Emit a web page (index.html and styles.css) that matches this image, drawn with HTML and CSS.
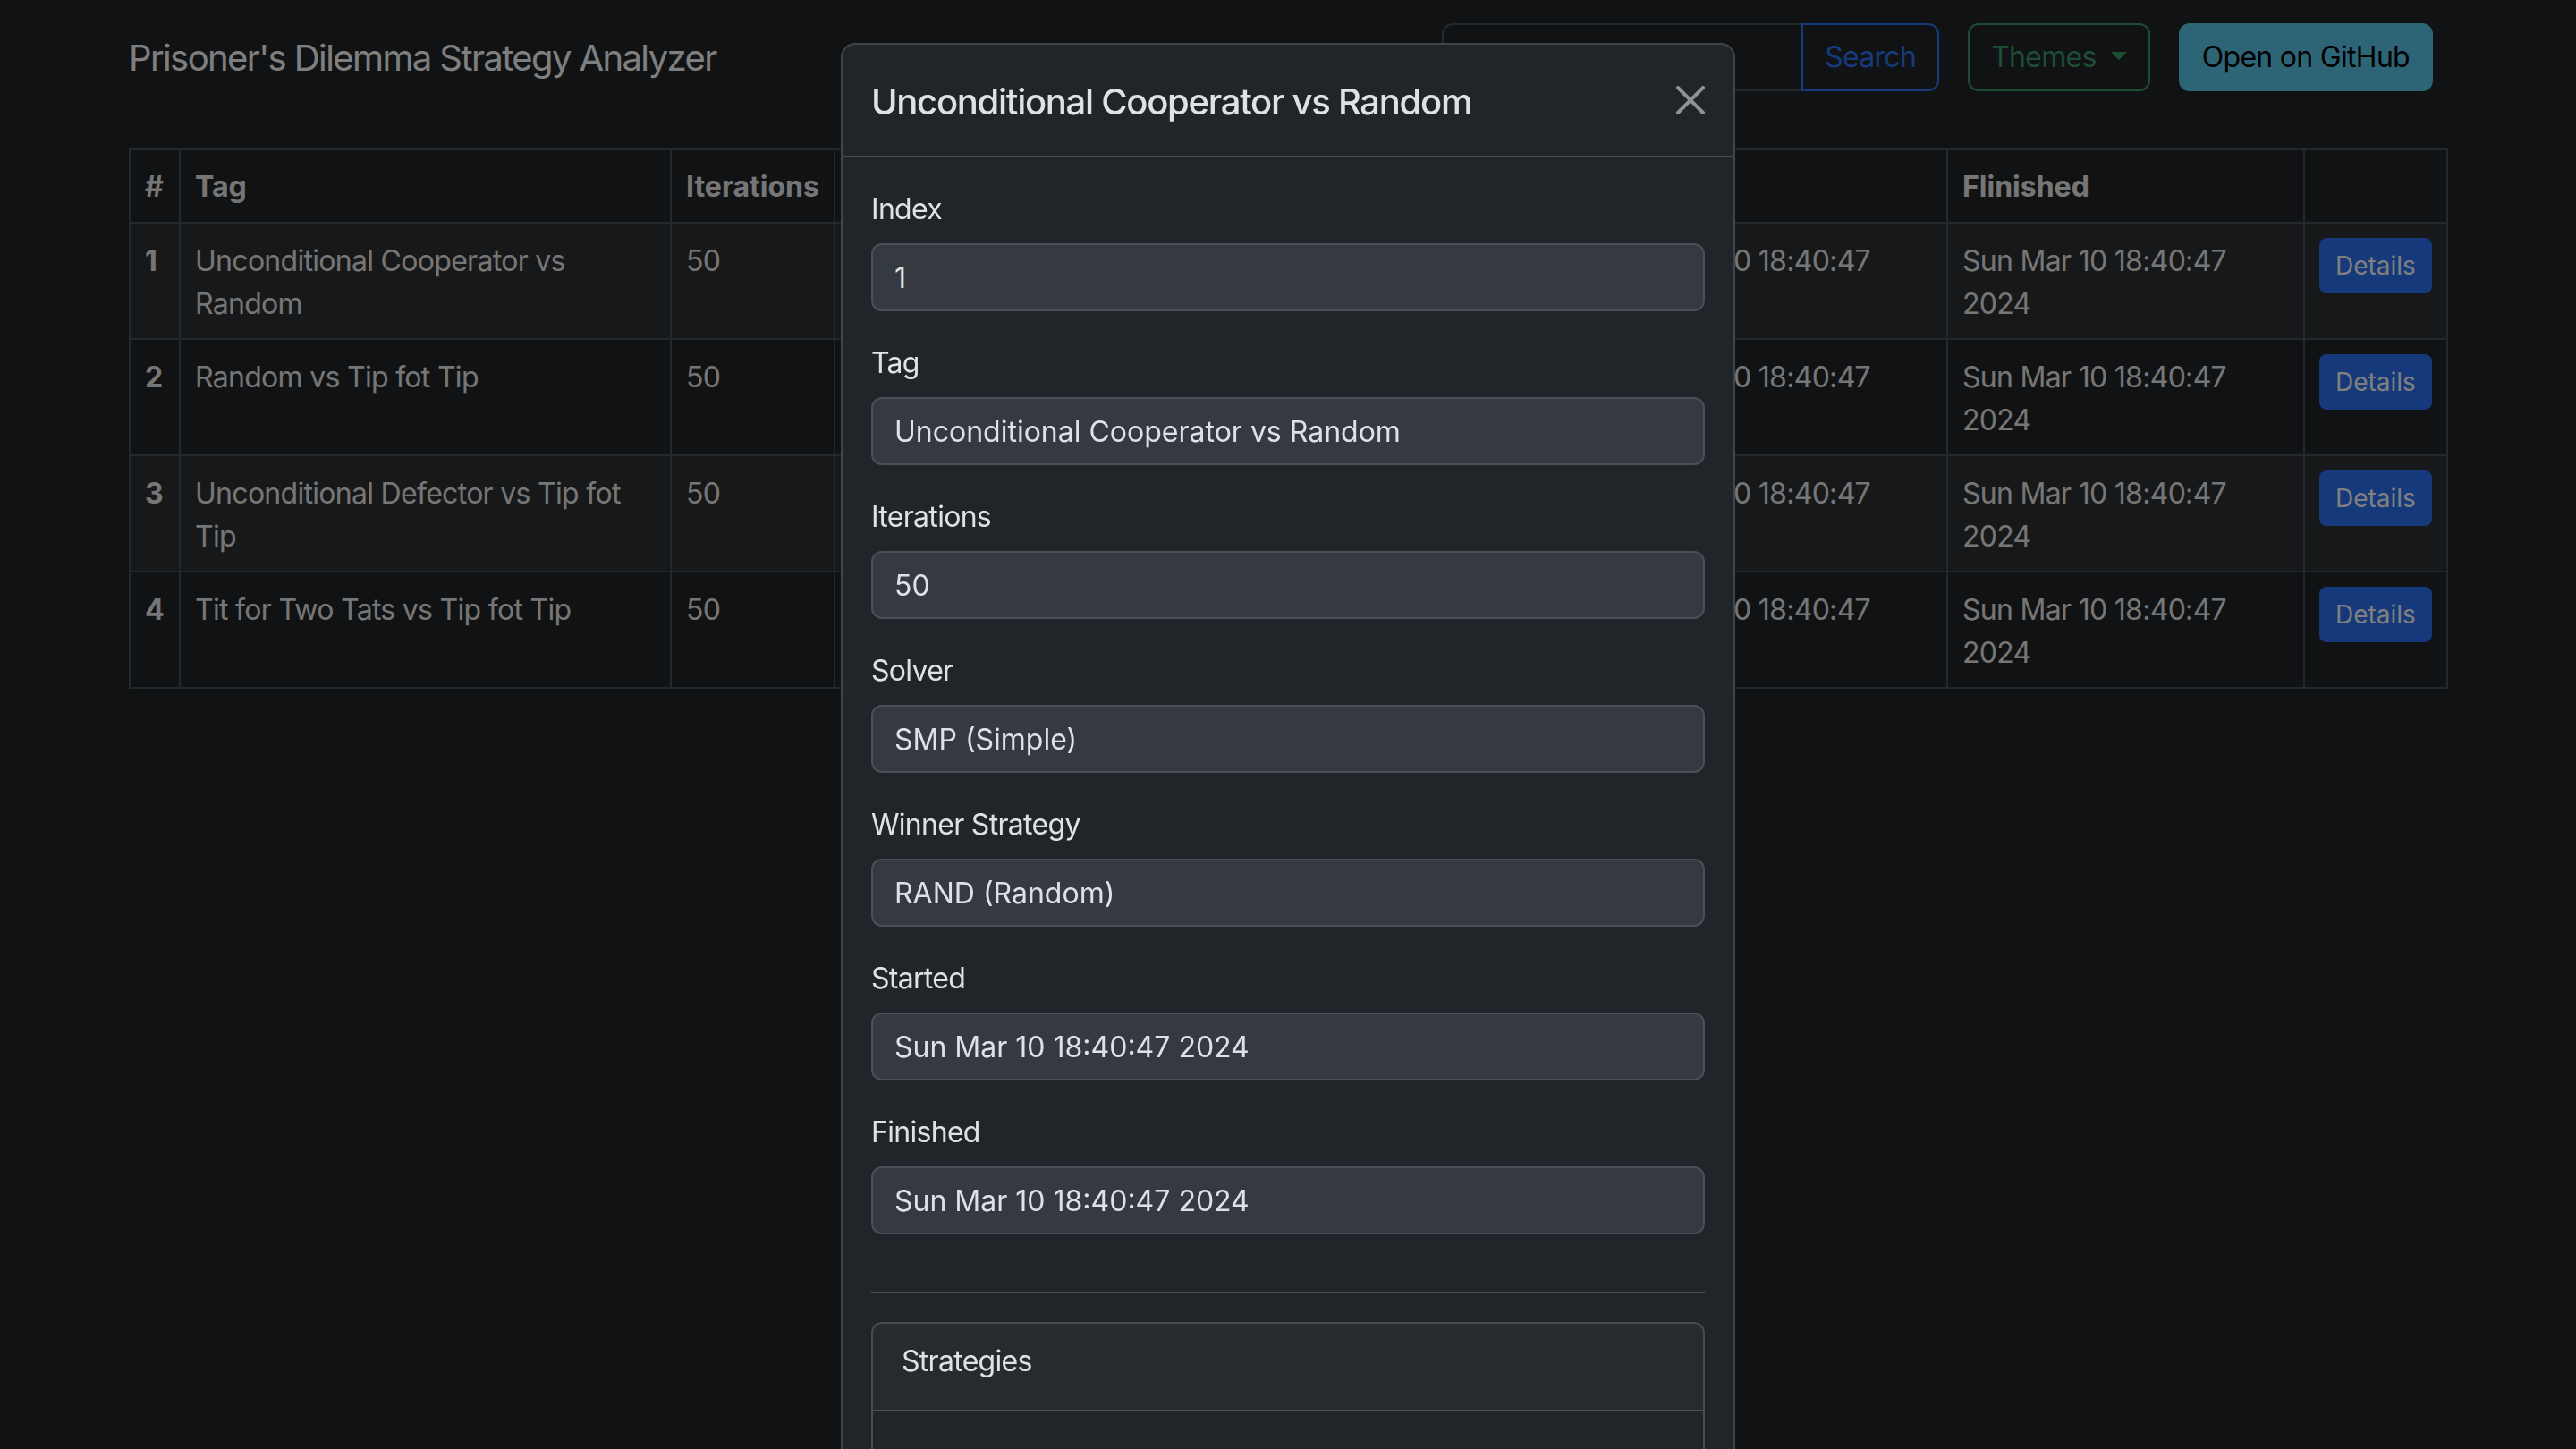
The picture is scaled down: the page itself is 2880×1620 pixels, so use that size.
FILE: index.html
```html
<!DOCTYPE html>
<html lang="en">
<head>
<meta charset="utf-8">
<title>Prisoner's Dilemma Strategy Analyzer</title>
<link rel="stylesheet" href="styles.css">
</head>
<body>
<nav class="navbar">
  <div class="container navbar-inner">
    <a class="brand" href="#">Prisoner's Dilemma Strategy Analyzer</a>
    <div class="nav-actions">
      <form class="search-group">
        <input class="search-input" type="search" placeholder="Search" aria-label="Search">
        <button class="btn btn-outline-primary search-btn" type="button">Search</button>
      </form>
      <button class="btn btn-outline-success dropdown-toggle" type="button">Themes</button>
      <a class="btn btn-info" href="#">Open on GitHub</a>
    </div>
  </div>
</nav>

<main class="container main">
  <table class="table">
    <colgroup>
      <col class="c-idx"><col class="c-tag"><col class="c-iter"><col class="c-solver"><col class="c-winner"><col class="c-start"><col class="c-finish"><col class="c-act">
    </colgroup>
    <thead>
      <tr><th>#</th><th>Tag</th><th>Iterations</th><th>Solver</th><th>Winner Strategy</th><th>Started</th><th>Flinished</th><th></th></tr>
    </thead>
    <tbody>
      <tr><th>1</th><td>Unconditional Cooperator vs Random</td><td>50</td><td>SMP (Simple)</td><td>RAND (Random)</td><td>Sun Mar 10 18:40:47 2024</td><td>Sun Mar 10 18:40:47 2024</td><td><button class="btn btn-primary btn-sm" type="button">Details</button></td></tr>
      <tr><th>2</th><td>Random vs Tip fot Tip</td><td>50</td><td>SMP (Simple)</td><td>TFT (Tit for Tat)</td><td>Sun Mar 10 18:40:47 2024</td><td>Sun Mar 10 18:40:47 2024</td><td><button class="btn btn-primary btn-sm" type="button">Details</button></td></tr>
      <tr><th>3</th><td>Unconditional Defector vs Tip fot Tip</td><td>50</td><td>SMP (Simple)</td><td>UD (Unconditional Defector)</td><td>Sun Mar 10 18:40:47 2024</td><td>Sun Mar 10 18:40:47 2024</td><td><button class="btn btn-primary btn-sm" type="button">Details</button></td></tr>
      <tr><th>4</th><td>Tit for Two Tats vs Tip fot Tip</td><td>50</td><td>SMP (Simple)</td><td>TFT (Tit for Tat)</td><td>Sun Mar 10 18:40:47 2024</td><td>Sun Mar 10 18:40:47 2024</td><td><button class="btn btn-primary btn-sm" type="button">Details</button></td></tr>
    </tbody>
  </table>
</main>

<div class="modal-backdrop"></div>

<div class="modal" role="dialog" aria-modal="true">
  <div class="modal-dialog">
    <div class="modal-content">
      <div class="modal-header">
        <h5 class="modal-title">Unconditional Cooperator vs Random</h5>
        <button class="btn-close" type="button" aria-label="Close">
          <svg viewBox="0 0 16 16" aria-hidden="true"><path fill="currentColor" d="M.293.293a1 1 0 0 1 1.414 0L8 6.586 14.293.293a1 1 0 1 1 1.414 1.414L9.414 8l6.293 6.293a1 1 0 0 1-1.414 1.414L8 9.414l-6.293 6.293a1 1 0 0 1-1.414-1.414L6.586 8 .293 1.707a1 1 0 0 1 0-1.414z"/></svg>
        </button>
      </div>
      <div class="modal-body">
        <form class="details-form">
          <div class="field"><label class="form-label">Index</label><input class="form-control" readonly value="1"></div>
          <div class="field"><label class="form-label">Tag</label><input class="form-control" readonly value="Unconditional Cooperator vs Random"></div>
          <div class="field"><label class="form-label">Iterations</label><input class="form-control" readonly value="50"></div>
          <div class="field"><label class="form-label">Solver</label><input class="form-control" readonly value="SMP (Simple)"></div>
          <div class="field"><label class="form-label">Winner Strategy</label><input class="form-control" readonly value="RAND (Random)"></div>
          <div class="field"><label class="form-label">Started</label><input class="form-control" readonly value="Sun Mar 10 18:40:47 2024"></div>
          <div class="field"><label class="form-label">Finished</label><input class="form-control" readonly value="Sun Mar 10 18:40:47 2024"></div>
        </form>
        <hr class="divider">
        <div class="card">
          <div class="card-header">Strategies</div>
          <div class="card-body"></div>
        </div>
      </div>
    </div>
  </div>
</div>
</body>
</html>
```
FILE: styles.css
```css
* { box-sizing: border-box; }

html, body { margin: 0; height: 100%; }

body {
  background: #212529;
  color: #dee2e6;
  font-family: Inter, "Noto Sans", "Liberation Sans", sans-serif;
  font-size: 32px;
  line-height: 1.5;
  letter-spacing: -0.022em;
  overflow: hidden;
}

.container {
  width: 2640px;
  margin: 0 auto;
  padding: 0 24px;
}

/* Navbar */
.navbar { height: 128px; }

.navbar-inner {
  height: 100%;
  display: flex;
  align-items: center;
  justify-content: space-between;
}

.brand {
  font-size: 40px;
  line-height: 60px;
  letter-spacing: -0.04em;
  color: #ffffff;
  text-decoration: none;
  padding-top: 2px;
}

.nav-actions {
  display: flex;
  align-items: center;
  gap: 32px;
  padding-right: 16px;
}

.search-group { display: flex; margin: 0; }

.search-input {
  width: 404px;
  height: 76px;
  margin: 0;
  padding: 12px 24px;
  font: inherit;
  color: #dee2e6;
  background: #212529;
  border: 2px solid #495057;
  border-radius: 12px 0 0 12px;
}
.search-input::placeholder { color: #8d949a; }

.btn {
  display: inline-block;
  margin: 0;
  padding: 12px 24px;
  font-family: inherit;
  font-size: 32px;
  line-height: 48px;
  font-weight: 400;
  letter-spacing: -0.022em;
  border: 2px solid transparent;
  border-radius: 12px;
  background: transparent;
  text-decoration: none;
  white-space: nowrap;
  cursor: pointer;
}

.btn-outline-primary { color: #2d74f4; border-color: #2d74f4; }
.search-btn { border-radius: 0 12px 12px 0; margin-left: -2px; }

.btn-outline-success { color: #3c9a68; border-color: #3c9a68; }

.dropdown-toggle::after {
  content: "";
  display: inline-block;
  margin-left: 16px;
  vertical-align: 8px;
  border-top: 9.6px solid;
  border-right: 9.6px solid transparent;
  border-left: 9.6px solid transparent;
}

.btn-info { background: #5ccbec; border-color: #5ccbec; color: #000; }

.btn-primary { background: #2a72f4; border-color: #2a72f4; color: #fff; }

.btn-sm {
  padding: 8px 16px;
  font-size: 28px;
  line-height: 42px;
  letter-spacing: 0;
  border-radius: 8px;
  vertical-align: top;
}

/* Table */
.main { padding-top: 38px; }

.table {
  width: 100%;
  border-collapse: collapse;
  table-layout: fixed;
  color: #ececec;
}

.c-idx { width: 56px; }
.c-tag { width: 549px; }
.c-iter { width: 183px; }
.c-solver { width: 423px; }
.c-winner { width: 423px; }
.c-start { width: 398px; }
.c-finish { width: 399px; }
.c-act { width: 160px; }

.table th,
.table td {
  border: 2px solid #495057;
  padding: 18px 16px 14px;
  text-align: left;
  vertical-align: top;
  line-height: 48px;
}

.table thead th { padding: 17px 16px 15px; }

.table th { font-weight: 700; letter-spacing: 0; }

.table td:last-child { padding-top: 16px; padding-bottom: 16px; }

.table tbody tr:nth-child(odd) > * { background: rgba(255, 255, 255, 0.05); }

/* Modal */
.modal-backdrop {
  position: fixed;
  inset: 0;
  background: rgba(0, 0, 0, 0.5);
}

.modal {
  position: fixed;
  inset: 0;
  overflow: hidden;
}

.modal-dialog {
  width: 1000px;
  margin: 48px auto;
}

.modal-content {
  background: #212529;
  color: #dee2e6;
  border: 2px solid rgba(255, 255, 255, 0.15);
  border-radius: 16px;
}

.modal-header {
  display: flex;
  align-items: center;
  padding: 32px;
  border-bottom: 2px solid #495057;
}

.modal-title {
  margin: 0;
  position: relative;
  top: 2px;
  font-size: 40px;
  line-height: 60px;
  font-weight: 500;
  letter-spacing: -0.032em;
}

.btn-close {
  margin: -16px -16px -16px auto;
  padding: 16px;
  width: 64px;
  height: 64px;
  border: 0;
  background: transparent;
  color: #fff;
  opacity: 0.5;
}
.btn-close svg { display: block; width: 32px; height: 32px; }

.modal-body { padding: 32px; }

.details-form { display: flow-root; margin: 0; }

.field { margin-bottom: 32px; }

.form-label {
  display: block;
  margin-bottom: 16px;
  line-height: 48px;
  position: relative;
  top: 2px;
}

.form-control {
  display: block;
  width: 100%;
  height: 76px;
  margin: 0;
  padding: 12px 24px;
  font: inherit;
  line-height: 48px;
  color: #dee2e6;
  background: #343a40;
  border: 2px solid #495057;
  border-radius: 12px;
}

.divider {
  margin: 32px 0;
  border: 0;
  border-top: 2px solid #dee2e6;
  opacity: 0.25;
}

.card {
  border: 2px solid rgba(255, 255, 255, 0.175);
  border-radius: 12px;
}

.card-header {
  padding: 18px 32px 30px;
  background: rgba(255, 255, 255, 0.03);
  border-bottom: 2px solid rgba(255, 255, 255, 0.175);
  border-radius: 10px 10px 0 0;
}

.card-body { padding: 32px; min-height: 240px; }
```
